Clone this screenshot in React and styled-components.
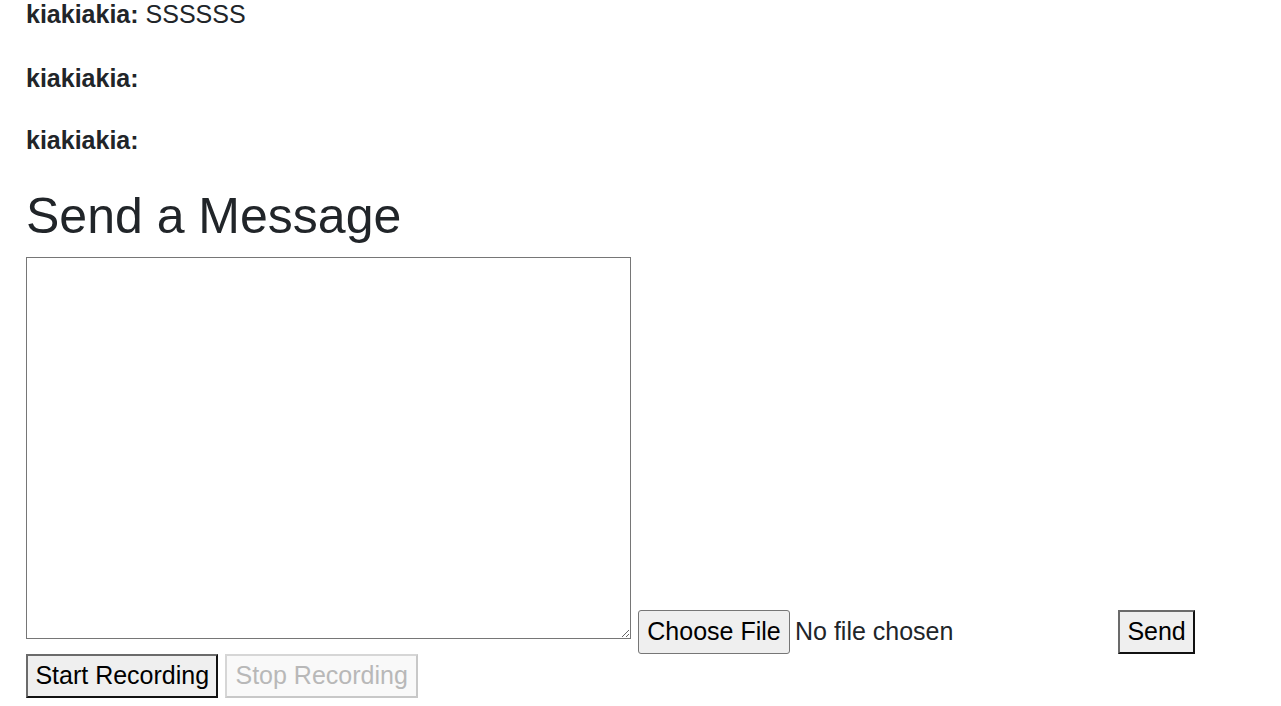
import React from "react";
import styled, { createGlobalStyle } from "styled-components";

const GlobalStyle = createGlobalStyle`
  body {
    margin: 0;
    background: #fff;
    color: #212529;
    font-family: "Liberation Sans", Arial, sans-serif;
  }
`;

const messages = [
  { user: "kiakiakia", text: "SSSSSS" },
  { user: "kiakiakia", text: "" },
  { user: "kiakiakia", text: "" },
];

const Page = styled.div`
  padding: 0 26px;
`;

const Message = styled.div`
  font-size: 25px;
  line-height: 28.75px;
  margin: 0 0 33.25px;

  &:first-child {
    margin-bottom: 35.25px;
  }
`;

const Sender = styled.strong`
  font-weight: 700;
`;

const Title = styled.h1`
  font-size: 50px;
  font-weight: 500;
  line-height: 60px;
  margin: -2px 0 11px;
`;

const Composer = styled.div`
  display: flex;
  align-items: flex-end;
  gap: 7px;
`;

const TextBox = styled.textarea`
  box-sizing: border-box;
  width: 605px;
  height: 382px;
  margin: 0 0 15px;
  border: 1px solid #767676;
  font: 25px "Liberation Sans", Arial, sans-serif;
  padding: 2px;
`;

const FileInput = styled.input`
  width: 473px;
  font: 25px "Liberation Sans", Arial, sans-serif;
  color: #212529;
  line-height: normal;

  &::file-selector-button {
    font: inherit;
    color: #000;
    background: #efefef;
    border: 1px solid #767676;
    border-radius: 3px;
    padding: 5.8px 8.3px 7.4px;
    margin: 0 5px 0 0;
  }
`;

const Button = styled.button`
  font: 25px "Liberation Sans", Arial, sans-serif;
  line-height: normal;
  padding: ${(p) => (p.disabled ? "4.8px 8px 6.4px" : "4.8px 7.4px 6.4px")};
  background: ${(p) => (p.disabled ? "#f9f9f9" : "#efefef")};
  color: ${(p) => (p.disabled ? "#b8b8b8" : "#000")};
  border: 2px solid;
  border-color: ${(p) =>
    p.disabled ? "#d6d6d6 #c8c8c8 #c8c8c8 #d6d6d6" : "#6b6b6b #111 #111 #6b6b6b"};
  border-radius: 0;
`;

const RecordRow = styled.div`
  display: flex;
  gap: 7px;
`;

export default function App() {
  return (
    <>
      <GlobalStyle />
      <Page>
        {messages.map((m, i) => (
          <Message key={i}>
            <Sender>{m.user}:</Sender> {m.text}
          </Message>
        ))}
        <Title>Send a Message</Title>
        <Composer>
          <TextBox />
          <FileInput type="file" />
          <Button>Send</Button>
        </Composer>
        <RecordRow>
          <Button>Start Recording</Button>
          <Button disabled>Stop Recording</Button>
        </RecordRow>
      </Page>
    </>
  );
}
